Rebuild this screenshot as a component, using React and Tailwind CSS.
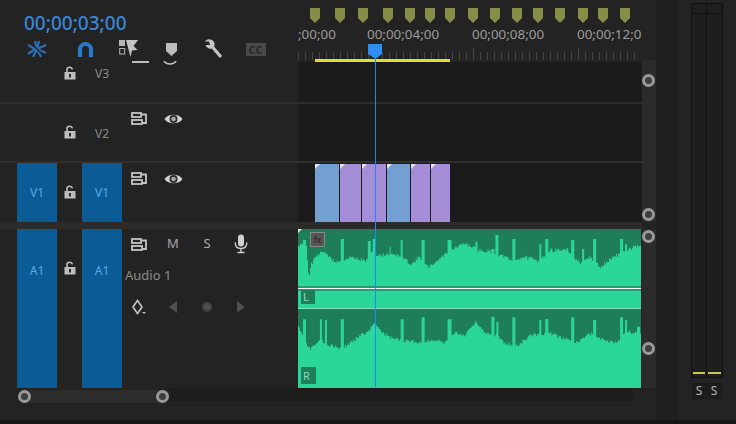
import React from "react";

const LB = [[20,60],[45,60],[48,130],[52,155],[58,110],[62,120],[66,100],[85,85],[100,80],[115,100],[130,110],[150,105],[180,97],[225,108],[240,85],[260,92],[300,85],[330,95],[360,118],[385,95],[410,128],[440,105],[470,80],[520,55],[560,75],[600,80],[640,95],[660,108],[700,95],[740,108],[780,75],[830,75],[870,118],[895,95],[930,128],[960,100],[990,85],[1010,75],[1055,55]];
const LS = [[36,45,45],[150,157,42],[230,238,48],[245,255,42],[295,300,65],[330,336,45],[393,402,45],[470,482,45],[555,561,50],[603,612,72],[615,622,30],[665,675,42],[745,752,58],[765,772,42],[842,852,45],[875,881,72],[907,917,42],[990,997,42],[1005,1010,58]];
const RB = [[20,300],[45,355],[55,372],[80,345],[110,358],[145,372],[165,362],[200,335],[230,320],[250,290],[270,322],[300,340],[340,348],[380,352],[430,345],[460,355],[490,322],[520,332],[555,290],[585,328],[620,332],[640,355],[680,362],[720,330],[780,325],[820,342],[860,352],[900,325],[940,348],[980,352],[1000,320],[1055,322]];
const RS = [[36,45,283],[85,92,283],[100,107,285],[150,158,283],[330,337,283],[393,402,277],[470,482,283],[603,610,275],[618,624,290],[665,675,277],[745,752,285],[765,772,282],[842,852,277],[907,917,285],[990,997,277],[1005,1010,285],[1040,1050,305]];

function wavePath(base, spikes, bottom, seed) {
  let r = seed;
  const rnd = () => { r = (r * 9301 + 49297) % 233280; return r / 233280; };
  const at = (x) => {
    for (let i = 0; i < base.length - 1; i++) {
      const [a, b] = base[i], [c, d] = base[i + 1];
      if (x >= a && x <= c) return b + ((d - b) * (x - a)) / (c - a || 1);
    }
    return base[base.length - 1][1];
  };
  let d = `M20 ${bottom}`;
  for (let x = 20; x < 1052; x += 3) {
    let y = at(x) + (rnd() - 0.5) * 11;
    for (const [s, e, t] of spikes) if (x + 1.5 >= s && x + 1.5 <= e) y = t;
    d += `L${x} ${y.toFixed(1)}L${x + 3} ${y.toFixed(1)}`;
  }
  return d + `L1055 ${bottom}Z`;
}

const Ring = () => <div className="w-[13px] h-[13px] rounded-full border-[3px] border-[#9a9a9a] bg-[#3f3f3f] shrink-0" />;

const Lock = () => (
  <svg width="12" height="14" viewBox="0 0 12 14" fill="none">
    <path d="M3 6V3.5C3 2 4.3 1.2 5.6 1.2S8 2 8.4 3.4" stroke="#bdbdbd" strokeWidth="1.6" />
    <rect x="0.5" y="6" width="11" height="7.5" fill="#bdbdbd" />
    <rect x="5" y="8" width="2" height="3.5" fill="#2a2a2a" />
  </svg>
);
const Sync = () => (
  <svg width="16" height="13" viewBox="0 0 16 13" fill="none" stroke="#c4c4c4" strokeWidth="1.8">
    <rect x="1" y="1" width="9" height="4" />
    <rect x="1" y="8" width="10" height="4" />
    <path d="M10 2.5h5v8.5H11" />
  </svg>
);
const Eye = () => (
  <svg width="19" height="14" viewBox="0 0 18 13">
    <path d="M0.5 6.5C4 1 14 1 17.5 6.5C14 12 4 12 0.5 6.5Z" fill="#d4d4d4" />
    <circle cx="9" cy="6.5" r="3.8" fill="#2a2a2a" />
    <circle cx="9" cy="6.5" r="2.2" fill="#a8a8a8" />
  </svg>
);
const Mic = () => (
  <svg width="14" height="20" viewBox="0 0 14 20" fill="none">
    <rect x="4" y="0.5" width="6" height="12" rx="3" fill="#cfcfcf" />
    <path d="M1.2 8.5C1.2 12.5 3.5 14.5 7 14.5S12.8 12.5 12.8 8.5" stroke="#cfcfcf" strokeWidth="1.4" />
    <path d="M7 14.5V18M3.5 18.5H10.5" stroke="#cfcfcf" strokeWidth="1.4" />
  </svg>
);
const Slot = ({ children, className = "" }) => (
  <div className={`w-[34px] flex items-center justify-center ${className}`}>{children}</div>
);

const BlueBtn = ({ label, className = "" }) => (
  <div className={`w-10 h-full bg-[#0b5b96] flex items-center justify-center text-[12px] text-[#5aa9e6] ${className}`}>{label}</div>
);
const clips = [
  ["w-[24px] mr-px", "bg-[#739fd2]"],
  ["w-[21px] mr-px", "bg-[#a58dd8]"],
  ["w-[24px] mr-px", "bg-[#a58dd8]"],
  ["w-[23px] mr-px", "bg-[#739fd2]"],
  ["w-[19px] mr-px", "bg-[#a58dd8]"],
  ["w-[19px]", "bg-[#a58dd8]"],
];
const markers = [315,340,363,388,410,430,450,473,495,517,538,560,583,603,625];
const labels = [[0, ";00;00"],[69, "00;00;04;00"],[174, "00;00;08;00"],[279, "00;00;12;0"]];

export default function App() {
  return (
    <div className="relative w-[736px] h-[424px] overflow-hidden bg-[#232323] flex font-['Noto_Sans',sans-serif]">
      <div className="w-[656px] flex flex-col shrink-0">
        {/* header */}
        <div className="h-[60px] flex shrink-0">
          <div className="w-[298px] shrink-0 pl-6 pt-[11px]">
            <div className="text-[19px] leading-[24px] font-medium text-[#3a86d6]">00;00;03;00</div>
            <div className="flex items-center h-[22px] mt-[3px] -ml-[3px]">
              <div className="w-[43px] flex justify-start pl-[6px]">
                <svg width="20" height="18" viewBox="0 0 20 18" fill="none" stroke="#2b6fb8" strokeWidth="2.2">
                  <path d="M1 5L8 9L1 14M6 17L10 9L8 1M12 1L10 9L19 5M19 13L10 9L14 17" />
                  <path d="M2 1L18 17" stroke="#232323" strokeWidth="1.3" />
                </svg>
              </div>
              <div className="w-[43px] flex justify-center">
                <svg width="17" height="17" viewBox="0 0 17 17" fill="none">
                  <path d="M3 16V8.5a5.5 5.5 0 0 1 11 0V16" stroke="#2a78c8" strokeWidth="4.2" />
                </svg>
              </div>
              <div className="w-[43px] flex justify-center">
                <svg width="19" height="18" viewBox="0 0 19 18">
                  <rect x="0" y="0" width="6" height="6" fill="#b5b5b5" />
                  <rect x="0.7" y="8.5" width="5" height="5.5" fill="none" stroke="#b5b5b5" />
                  <path d="M7 0H19L14.5 6L18.5 10L13 10.5L11.5 17Z" fill="#c4c4c4" />
                </svg>
              </div>
              <div className="w-[43px] flex justify-center">
                <svg width="11" height="14" viewBox="0 0 11 14"><path d="M0 1H11V9L5.5 14L0 9Z" fill="#bdbdbd" /></svg>
              </div>
              <div className="w-[41px] flex justify-center">
                <svg width="19" height="20" viewBox="0 0 19 20" fill="none">
                  <path d="M8 7.5L17 18" stroke="#c4c4c4" strokeWidth="3.2" />
                  <path d="M6.5 0.5A5 4.5 0 0 0 1 2.5L5 2.5L6 6L1.5 6A5 5 0 0 0 9.5 8.5A5 5 0 0 0 6.5 0.5Z" fill="#c4c4c4" />
                </svg>
              </div>
              <div className="w-[43px] flex justify-center">
                <div className="w-[20px] h-[13px] bg-[#4a4a4a] text-[#282828] text-[11px] leading-[13px] font-bold text-center">CC</div>
              </div>
            </div>
          </div>
          <div className="w-[344px] shrink-0 relative overflow-hidden bg-[#232323]">
            {markers.map((m) => (
              <svg key={m} className="absolute top-[8px]" style={{ left: m - 298 - 5 }} width="10" height="15" viewBox="0 0 10 15">
                <path d="M0 0H10V10L5 15L0 10Z" fill="#858e46" />
              </svg>
            ))}
            {labels.map(([x, t]) => (
              <span key={t} className="absolute top-[25px] text-[13.4px] leading-[18px] text-[#9c9c9c] whitespace-nowrap" style={{ left: x }}>{t}</span>
            ))}
            <svg className="absolute left-0 top-[48px]" width="344" height="12">
              {Array.from({ length: 49 }, (_, i) => (
                <line key={i} x1={i * 7 + 0.5} x2={i * 7 + 0.5} y1={i % 15 === 10 ? 0 : 4} y2="12" stroke="#464646" />
              ))}
            </svg>
          </div>
        </div>

        {/* body */}
        <div className="flex shrink-0">
          <div className="w-[642px] shrink-0 flex flex-col">
            {/* V3 */}
            <div className="h-[44px] flex border-b-2 border-[#2c2c2c]">
              <div className="w-[298px] relative shrink-0 flex pl-[57px]">
                <div className="w-[25px] flex justify-center pt-[6px]"><Lock /></div>
                <div className="w-10 text-center pt-[5px] text-[12px] leading-[18px] text-[#8a8a8a]">V3</div>
                <div className="w-[34px] pl-[10px] pt-[1px]"><div className="w-[17px] h-[2px] bg-[#bdbdbd]" /></div>
                <div className="pt-[1px] pl-[7px]">
                  <svg width="14" height="5" viewBox="0 0 14 5"><path d="M1 0C3 4 11 4 13 0" stroke="#c4c4c4" strokeWidth="1.6" fill="none" /></svg>
                </div>
              </div>
              <div className="flex-1 bg-[#1b1b1b] border-t-2 border-[#232323]" />
            </div>
            {/* V2 */}
            <div className="h-[59px] flex border-b-[2px] border-[#2f2f2f]">
              <div className="w-[298px] shrink-0 flex pl-[57px]">
                <div className="w-[25px] flex justify-center pt-[21px]"><Lock /></div>
                <div className="w-10 text-center pt-[21px] text-[12px] leading-[18px] text-[#8a8a8a]">V2</div>
                <div className="flex h-[23px] pt-[6px]">
                  <Slot><Sync /></Slot><Slot><Eye /></Slot>
                </div>
              </div>
              <div className="flex-1 bg-[#1b1b1b]" />
            </div>
            {/* V1 */}
            <div className="h-[59px] flex">
              <div className="w-[298px] shrink-0 flex pl-[17px]">
                <BlueBtn label="V1" />
                <div className="w-[25px] flex justify-center pt-[22px]"><Lock /></div>
                <BlueBtn label="V1" />
                <div className="flex h-[25px] pt-[6px]">
                  <Slot><Sync /></Slot><Slot><Eye /></Slot>
                </div>
              </div>
              <div className="flex-1 bg-[#1b1b1b] pl-[17px] pt-px flex">
                {clips.map(([w, c], i) => (
                  <div key={i} className={`${w} ${c} relative shrink-0`}>
                    <div className="absolute top-0 left-0 w-0 h-0 border-t-[5px] border-r-[5px] border-t-[#e8e8e8] border-r-transparent" />
                  </div>
                ))}
              </div>
            </div>
            <div className="h-[7px] bg-[#2b2b2b]" />
            {/* A1 */}
            <div className="h-[159px] flex">
              <div className="w-[298px] shrink-0 flex pl-[17px]">
                <BlueBtn label={<span className="-mt-[76px]">A1</span>} />
                <div className="w-[25px] flex justify-center pt-[32px]"><Lock /></div>
                <BlueBtn label={<span className="-mt-[76px]">A1</span>} />
                <div className="flex flex-col">
                  <div className="flex h-[30px] items-center">
                    <Slot><Sync /></Slot>
                    <Slot className="text-[13px] text-[#a8a8a8]">M</Slot>
                    <Slot className="text-[13px] text-[#a8a8a8]">S</Slot>
                    <Slot><Mic /></Slot>
                  </div>
                  <div className="pl-[3px] h-[20px] mt-[6px] text-[13px] leading-[20px] text-[#8c8c8c]">Audio 1</div>
                  <div className="flex h-[20px] items-center mt-[12px]">
                    <Slot>
                      <svg width="16" height="16" viewBox="0 0 16 16" fill="none">
                        <path d="M6.5 1.5L11 8L6.5 14.5L2 8Z" stroke="#c4c4c4" strokeWidth="1.6" />
                        <path d="M11 13H15L13 15Z" fill="#c4c4c4" />
                      </svg>
                    </Slot>
                    <Slot><svg width="8" height="12" viewBox="0 0 8 12"><path d="M8 0V12L0 6Z" fill="#4f4f4f" /></svg></Slot>
                    <Slot><div className="w-[10px] h-[10px] rounded-full bg-[#4f4f4f] border-2 border-[#444]" /></Slot>
                    <Slot><svg width="8" height="12" viewBox="0 0 8 12"><path d="M0 0V12L8 6Z" fill="#4f4f4f" /></svg></Slot>
                  </div>
                </div>
              </div>
              <div className="flex-1 relative overflow-hidden">
                <svg width="343" height="159" viewBox="20 12 1032 477" preserveAspectRatio="none">
                  <rect x="20" y="12" width="1035" height="477" fill="#1e7e5a" />
                  <path d={wavePath(LB, LS, 250, 11)} fill="#2bd699" />
                  <path d={wavePath(RB, RS, 489, 37)} fill="#2bd699" />
                  <rect x="20" y="249" width="1035" height="3" fill="#7fe0bb" />
                  <rect x="20" y="185" width="1035" height="11" fill="#123a2b" />
                  <rect x="20" y="188" width="1035" height="5" fill="#ffffff" />
                  <path d="M20 12H32L20 24Z" fill="#e8e8e8" />
                </svg>
                <div className="absolute left-[3px] top-[61px] w-[14px] h-[14px] bg-[#1e7e5a] text-[11px] leading-[14px] pl-[2px] text-[#8fd8bb]">L</div>
                <div className="absolute left-[3px] top-[138px] w-[15px] h-[17px] bg-[#1e7e5a] text-[11px] leading-[17px] pl-[2px] text-[#8fd8bb]">R</div>
                <div className="absolute left-[12px] top-[3px] w-[15px] h-[15px] bg-[#555] border border-[#8a8a8a] text-[8px] leading-[13px] text-center text-[#222]">fx</div>
              </div>
            </div>
          </div>
          {/* vertical scroll bars */}
          <div className="w-[14px] shrink-0 flex flex-col">
            <div className="h-[162px] bg-[#2b2b2b] flex flex-col justify-between items-center pt-[14px] pb-[1px] pr-px">
              <Ring /><Ring />
            </div>
            <div className="h-[7px]" />
            <div className="h-[159px] bg-[#2b2b2b] flex flex-col justify-between items-center pt-px pb-[33px] pr-px">
              <Ring /><Ring />
            </div>
          </div>
        </div>

        {/* bottom scroll bar */}
        <div className="h-[31px] shrink-0 flex items-start bg-[#232323]">
          <div className="h-[13px] mt-[2px] ml-[18px] w-[151px] bg-[#2c2c2c] flex justify-between rounded-full">
            <Ring /><Ring />
          </div>
          <div className="h-[13px] mt-0 w-[464px] bg-[#1d1d1d]" />
        </div>
      </div>

      {/* audio meter panel */}
      <div className="w-[20px] shrink-0 bg-[#202020]" />
      <div className="flex-1 bg-[#232323] border-l border-[#1a1a1a] flex flex-col items-center pt-[3px]">
        <div className="w-[32px] h-[375px] bg-[#1e1e1e] border border-[#111] flex relative">
          <div className="flex-1 border-r border-[#111] flex flex-col justify-between">
            <div className="h-[10px] border-b border-[#111]" />
            <div className="h-[2px] mb-[3px] mx-[1px] bg-[#c9c94a]" />
          </div>
          <div className="flex-1 flex flex-col justify-between">
            <div className="h-[10px] border-b border-[#111]" />
            <div className="h-[2px] mb-[3px] mx-[1px] bg-[#c9c94a]" />
          </div>
        </div>
        <div className="flex mt-[5px] text-[12px] leading-[16px] text-[#b5b5b5]">
          <span className="w-[15px] text-center bg-[#1c1c1c]">S</span>
          <span className="w-[15px] text-center bg-[#1c1c1c]">S</span>
        </div>
        <div className="flex-1" />
      </div>

      {/* bottom edge */}
      <div className="absolute left-0 right-0 bottom-0 h-[4px] bg-[#171717]" />

      {/* playhead */}
      <div className="absolute left-[375px] top-[57px] w-px h-[330px] bg-[#1f8ae8]" />
      <svg className="absolute left-[367px] top-[43px]" width="16" height="18" viewBox="0 0 16 18">
        <path d="M1 1H15V11L8.5 16L1 11Z" fill="#2f8cf0" />
      </svg>
      {/* yellow work-area bar */}
      <div className="absolute left-[315px] top-[59px] w-[60px] h-[3px] bg-[#e6dc2e]" />
      <div className="absolute left-[376px] top-[59px] w-[74px] h-[3px] bg-[#e6dc2e]" />
    </div>
  );
}
